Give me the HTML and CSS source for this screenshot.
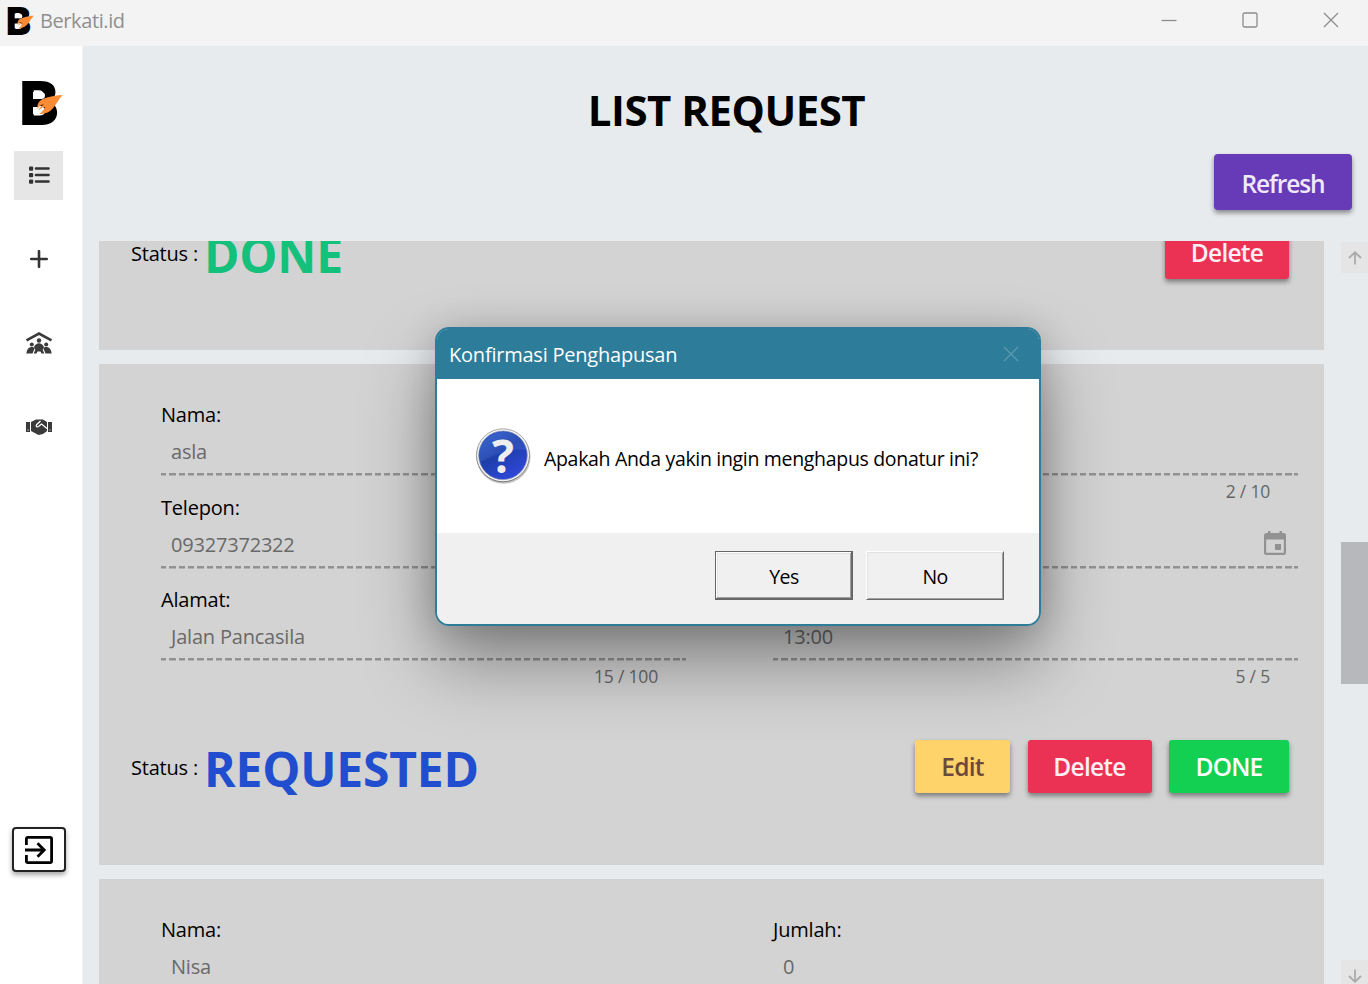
FILE: index.html
```html
<!DOCTYPE html>
<html lang="id">
<head>
<meta charset="utf-8">
<title>Berkati.id</title>
<link rel="stylesheet" href="styles.css">
</head>
<body>
<svg width="0" height="0" class="defs" aria-hidden="true">
  <symbol id="logo" viewBox="0 0 42 46">
    <text x="-1.5" y="45" class="logo-letter" textLength="39" lengthAdjust="spacingAndGlyphs">B</text>
    <path d="M12 12H20Q24 12 24 15.500T20 19H12ZM12 27H22V34H12Z" fill="#fff"/>
    <path d="M12 19H20L17 27H12Z" fill="#000"/>
    <path d="M16.500 29C15.500 22 20 19 26 17.500C32 16 36 15 41.500 15C38 19 36 23 33 27C29 32 25 34 18 34C20 33 23 30 24 27C21 27 19 29 17.500 31C18 28 20 26 23 24.500C20 24.500 18 26 16.500 29Z" fill="#fb8b34"/>
  </symbol>
</svg>

<div class="window">
  <header class="titlebar">
    <svg class="titlebar-logo"><use href="#logo"/></svg>
    <span class="titlebar-name">Berkati.id</span>
    <div class="controls">
      <svg width="16" height="16" viewBox="0 0 16 16"><path d="M.5 8.500H15.500"/></svg>
      <svg width="16" height="16" viewBox="0 0 16 16"><rect x="1" y="1" width="14" height="14" rx="1.500"/></svg>
      <svg width="16" height="16" viewBox="0 0 16 16"><path d="M1 1L15 15M15 1L1 15"/></svg>
    </div>
  </header>

  <div class="app">
    <nav class="sidebar">
      <svg class="sidebar-logo"><use href="#logo"/></svg>
      <a class="nav-item nav-active"><svg width="22" height="18" viewBox="0 0 22 18"><path d="M8 2.500H20.500M8 9H20.500M8 15.500H20.500" stroke="#333" stroke-width="2.600" stroke-linecap="round"/><g fill="#333"><rect x="1" y=".5" width="4.200" height="4.200" rx="1"/><rect x="1" y="7" width="4.200" height="4.200" rx="1"/><rect x="1" y="13.500" width="4.200" height="4.200" rx="1"/></g></svg></a>
      <a class="nav-item"><svg width="18" height="18" viewBox="0 0 18 18"><path d="M9 1.200V16.800M1.200 9H16.800" stroke="#333" stroke-width="2.600" stroke-linecap="round"/></svg></a>
      <a class="nav-item"><svg width="28" height="24" viewBox="0 0 28 24"><path d="M1.500 9.300L14 2.500L26.500 9.300" fill="none" stroke="#3b3b3b" stroke-width="2.600"/><g fill="#3b3b3b"><circle cx="14" cy="9.500" r="2.200"/><circle cx="6.800" cy="13.500" r="2"/><circle cx="21.200" cy="13.500" r="2"/><path d="M1.300 22.500C2 18 4 16 6.800 16C8 16 9 16.500 9.700 17.300L7.500 22.500ZM26.700 22.500C26 18 24 16 21.200 16C20 16 19 16.500 18.300 17.300L20.500 22.500Z"/><path d="M8.600 22.500L10.300 19L9 16C10.300 13.600 12 12.300 14 12.300S17.700 13.600 19 16L17.700 19L19.400 22.500H16.500L15.500 20.500H12.500L11.500 22.500Z"/></g></svg></a>
      <a class="nav-item"><svg width="28" height="18" viewBox="0 0 28 18"><g fill="#3b3b3b"><path d="M1 4H5V14H1ZM23 4H27V14H23Z"/><path d="M6 4L11 1.500H18L22 4V13L18 16L13.500 17L6 13Z"/></g><path d="M22 10.500L16.500 6L13.500 8.500C12 9.500 10.500 8 11.500 6.800L15.500 3" fill="none" stroke="#fff" stroke-width="1.300"/><path d="M2.500 12H3.500M24.500 12H25.500" stroke="#fff"/></svg></a>
      <button class="logout"><svg width="30" height="30" viewBox="0 0 30 30"><g fill="none" stroke="#000" stroke-width="2.800"><path d="M2.400 10V4Q2.400 2.400 4 2.400H26Q27.600 2.400 27.600 4V26Q27.600 27.600 26 27.600H4Q2.400 27.600 2.400 26V20"/><path d="M1 15H20M13.500 8.300L20.200 15L13.500 21.700"/></g></svg></button>
    </nav>

    <main class="main">
      <h1 class="title">LIST REQUEST</h1>
      <div class="toolbar"><button class="btn btn-refresh">Refresh</button></div>

      <div class="scroller">
        <div class="list">
          <section class="card card-cut">
            <div class="status-row">
              <span class="status-label">Status :</span><strong class="status done">DONE</strong>
              <div class="actions"><button class="btn btn-delete">Delete</button></div>
            </div>
          </section>

          <section class="card">
            <div class="fields">
              <div class="field"><label>Nama:</label><div class="value">asla</div></div>
              <div class="field"><label></label><div class="value"></div><span class="counter">2 / 10</span></div>
              <div class="field"><label>Telepon:</label><div class="value">09327372322</div></div>
              <div class="field"><label></label><div class="value value-date"><svg width="22" height="24" viewBox="0 0 22 24"><path fill="#929292" fill-rule="evenodd" d="M4 0H6.500V2H15.500V0H18V2H19.500Q22 2 22 4.500V21.500Q22 24 19.500 24H2.500Q0 24 0 21.500V4.500Q0 2 2.500 2H4ZM2.200 8.500V21.800H19.800V8.500ZM11 13H17V19H11Z"/></svg></div></div>
              <div class="field"><label>Alamat:</label><div class="value">Jalan Pancasila</div><span class="counter">15 / 100</span></div>
              <div class="field"><label></label><div class="value">13:00</div><span class="counter">5 / 5</span></div>
            </div>
            <div class="status-row">
              <span class="status-label">Status :</span><strong class="status requested">REQUESTED</strong>
              <div class="actions">
                <button class="btn btn-edit">Edit</button>
                <button class="btn btn-delete">Delete</button>
                <button class="btn btn-done">DONE</button>
              </div>
            </div>
          </section>

          <section class="card">
            <div class="fields">
              <div class="field"><label>Nama:</label><div class="value">Nisa</div></div>
              <div class="field"><label>Jumlah:</label><div class="value">0</div></div>
            </div>
          </section>
        </div>

        <div class="scrollbar">
          <div class="scroll-btn"><svg width="14" height="14" viewBox="0 0 14 14"><path d="M7 13.500V1.500M1 7L7 1.200L13 7"/></svg></div>
          <div class="thumb"></div>
          <div class="scroll-btn scroll-down"><svg width="14" height="14" viewBox="0 0 14 14"><path d="M7 .5V12.500M1 7L7 12.800L13 7"/></svg></div>
        </div>
      </div>
    </main>
  </div>

  <div class="dialog" role="dialog">
    <div class="dialog-title"><span class="dialog-name">Konfirmasi Penghapusan</span>
      <svg width="16" height="16" viewBox="0 0 16 16"><path d="M1 1L15 15M15 1L1 15" stroke="#5b9ab0" stroke-width="1.300"/></svg>
    </div>
    <div class="dialog-body">
      <svg width="56" height="57" viewBox="0 0 56 57">
        <defs>
          <linearGradient id="ball" x1="0" y1="0" x2=".6" y2="1"><stop offset="0" stop-color="#3560d0"/><stop offset=".5" stop-color="#1c3fa6"/><stop offset="1" stop-color="#2f46d8"/></linearGradient>
          <linearGradient id="rim" x1="0" y1="0" x2="0" y2="1"><stop offset="0" stop-color="#aaa"/><stop offset="1" stop-color="#777"/></linearGradient>
        </defs>
        <circle cx="28.500" cy="28.800" r="27" fill="#aaa" opacity=".7"/>
        <circle cx="28" cy="27.300" r="26.500" fill="#f4f4f4" stroke="url(#rim)"/>
        <circle cx="28" cy="27.300" r="24.300" fill="url(#ball)" stroke="#8a93b5" stroke-width=".7"/>
        <path d="M4.500 28C5 14 15 5 28 4C40 4 50 13 51.500 22C33 19 17 29 5 34Z" fill="#7ea0ff" opacity=".16"/>
        <text x="28" y="44.500" text-anchor="middle" class="question">?</text>
      </svg>
      <span class="dialog-text">Apakah Anda yakin ingin menghapus donatur ini?</span>
    </div>
    <div class="dialog-footer">
      <button class="win-btn win-default"><span>Yes</span></button>
      <button class="win-btn"><span>No</span></button>
    </div>
  </div>
</div>
</body>
</html>
```

FILE: styles.css
```css
* { box-sizing: border-box; }
body { margin: 0; font-family: "Open Sans", "Noto Sans", sans-serif; font-size: 20px; color: #000; }
button { font: inherit; border: 0; padding: 0; }
svg { display: block; flex: none; }
.defs { position: absolute; }
.window { position: relative; width: 1368px; height: 984px; overflow: hidden; display: flex; flex-direction: column; }

.titlebar { height: 46px; flex: none; display: flex; align-items: center; background: #f3f3f3; padding: 0 21px 5px 7px; color: #8f8f8f; }
.titlebar-logo { width: 27px; height: 30px; }
.titlebar-name { margin-left: 6px; line-height: 40px; letter-spacing: -0.4px; }
.controls { margin-left: auto; display: flex; gap: 65px; padding-right: 8.5px; margin-top: -1px; }
.controls svg { fill: none; stroke: #8d8d8d; stroke-width: 1.3; }
.logo-letter { font: 900 60px Inter, sans-serif; fill: #000; }

.app { flex: 1; min-height: 0; display: flex; }
.sidebar { width: 83px; flex: none; background: #fff; border-right: 1px solid #f0f2f3; display: flex; flex-direction: column; padding: 34px 0 0 14px; }
.sidebar-logo { width: 42px; height: 46px; margin: 0 0 25px 7px; }
.nav-item { width: 49px; height: 49px; margin-bottom: 35px; display: flex; align-items: center; justify-content: center; padding: 0 0 2px 1px; }
.nav-active { background: #e6e6e6; }
.logout { width: 54px; height: 45px; margin: 340px 0 0 -2.500px; display: flex; align-items: center; justify-content: center; background: #fff; border: 2px solid #222; border-radius: 4px; box-shadow: 0 3px 5px rgba(0,0,0,.35); }

.main { flex: 1; min-width: 0; background: #e7ebee; display: flex; flex-direction: column; }
.title { margin: 34px 0 0 2px; text-align: center; font-size: 42px; font-weight: 700; line-height: 60px; letter-spacing: -0.5px; }
.toolbar { height: 101px; display: flex; justify-content: flex-end; padding: 14px 16px 0 0; }
.btn { height: 53px; border-radius: 3px; font-size: 24.5px; font-weight: 600; letter-spacing: -0.75px; color: #ffeef2; box-shadow: 0 3px 5px rgba(0,0,0,.42); padding-top: 1px; }
.btn-refresh { width: 138px; height: 56px; background: #673ab7; color: #f0e9fb; border-radius: 4px; padding-top: 2px; letter-spacing: -1.1px; }
.btn-delete { width: 124px; background: #ec3254; }
.btn-edit { width: 95px; background: #fed36a; color: #6b4a3c; }
.btn-done { width: 120px; background: #13cf52; color: #fff; }

.scroller { flex: 1; min-height: 0; display: flex; }
.list { width: 1225px; margin-left: 16px; overflow: hidden; display: flex; flex-direction: column; gap: 14px; }
.card { height: 501px; flex: none; background: #d3d3d3; padding: 35px 35px 0 32px; }
.card-cut { height: 109px; padding-top: 0; overflow: hidden; }
.card-cut .status-row { margin-top: -15.5px; }
.fields { display: grid; grid-template-columns: 525px 525px; grid-auto-rows: 92.5px; column-gap: 87px; padding-left: 30px; }
.field { display: flex; flex-direction: column; letter-spacing: -0.2px; }
.field label { height: 32px; line-height: 32px; flex: none; }
.value { height: 45px; flex: none; line-height: 42px; padding-left: 10px; color: #696969; background: repeating-linear-gradient(90deg, #929292 0 6.4px, transparent 6.4px 9.33px) -1px 42px / calc(100% + 1px) 2.5px no-repeat; }
.value-date { display: flex; justify-content: flex-end; padding: 7px 12px 0 0; }
.counter { align-self: flex-end; font-size: 17.500px; line-height: 30px; color: #666; padding-right: 28px; }
.status-row { display: flex; align-items: center; height: 53px; margin-top: 63px; }
.status-label { width: 73px; padding-top: 3px; letter-spacing: -0.2px; white-space: nowrap; }
.status { font-size: 48px; line-height: 53px; padding-top: 4px; letter-spacing: -0.2px; }
.done { color: #15c07d; }
.requested { color: #204ecf; }
.actions { margin-left: auto; display: flex; gap: 17.5px; }

.scrollbar { width: 27px; margin-left: auto; display: flex; flex-direction: column; }
.scroll-btn { height: 31px; flex: none; margin-top: 1px; padding-top: 1px; background: #e5e5e5; display: flex; align-items: center; justify-content: center; }
.scroll-btn svg { fill: none; stroke: #aaa; stroke-width: 1.8; }
.thumb { height: 142px; flex: none; margin-top: 269px; background: #b7b8bc; }
.scroll-down { margin-top: 276px; height: 24px; padding-top: 7px; }

.dialog { position: absolute; left: 435px; top: 327px; width: 606px; height: 299px; border: 2px solid #2d7c9a; border-radius: 14px; overflow: hidden; display: flex; flex-direction: column; box-shadow: 0 36px 72px rgba(0,0,0,.38), 0 2px 34px rgba(0,0,0,.16); }
.dialog-title { height: 50px; display: flex; align-items: center; justify-content: space-between; padding: 0 20px 0 12px; background: #2d7c9a; color: #fff; }
.dialog-name { letter-spacing: -0.22px; }
.dialog-body { height: 154px; display: flex; align-items: center; gap: 13px; padding-left: 38px; background: #fff; }
.dialog-text { padding-top: 4px; font-size: 19.5px; letter-spacing: -0.32px; white-space: nowrap; }
.dialog-footer { flex: 1; background: #f0f0f0; display: flex; justify-content: flex-end; gap: 13px; padding: 18px 35px 0 0; }
.win-btn { width: 138px; height: 49px; background: #f0f0f0; font-size: 19.5px; letter-spacing: -0.6px; border: 1px solid; border-color: #fff #696969 #696969 #fff; box-shadow: inset 1px 1px #e3e3e3, inset -1px -1px #a0a0a0; padding-top: 2px; }
.win-default { border: 1px solid #666; box-shadow: inset -1px -1px #696969, inset 1px 1px #fff, inset -2px -2px #a0a0a0, inset 2px 2px #e3e3e3; }
.question { font: 700 46px "Open Sans", sans-serif; fill: #eee; }
```
